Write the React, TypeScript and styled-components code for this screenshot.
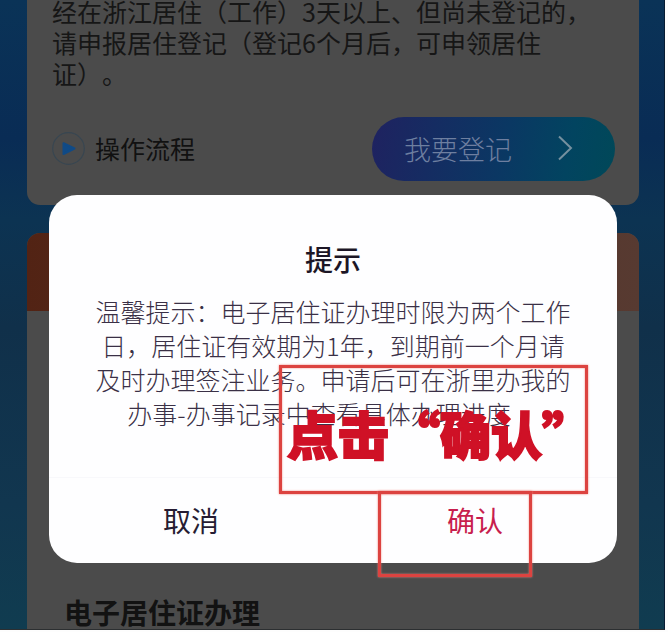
import React from "react";
import styled, { createGlobalStyle } from "styled-components";

const GlobalStyle = createGlobalStyle`
  *, *::before, *::after { box-sizing: border-box; }
  body {
    margin: 0;
    background: #fdfdfd;
    font-family: "Noto Sans CJK SC", "Liberation Sans", sans-serif;
    text-spacing-trim: space-all;
  }
  h1, h2, p { margin: 0; }
  button { border: 0; padding: 0; background: none; font: inherit; cursor: pointer; }
`;

const Page = styled.div`
  display: flex;
  min-height: 100vh;
  padding: 0 3px 3px 0;
`;

const Screen = styled.main`
  position: relative;
  flex: 1;
  display: flex;
  flex-direction: column;
  gap: 28px;
  padding: 0 25px 0 27px;
  overflow: hidden;
  border-right: 1px solid #071c33;
  border-bottom: 1px solid #2c2f31;
  background: linear-gradient(180deg, #0a3357 0%, #092c55 22%, #0c3352 35%, #10304a 52%, #11364f 80%, #103c50 100%);
`;

const NoticeCard = styled.section`
  padding: 0 40px 24px 25px;
  border-radius: 0 0 13px 13px;
  background: #4b4b4b;
`;

const NoticeText = styled.p`
  margin-top: -4px;
  color: #161616;
  font-size: 25px;
  line-height: 31px;
`;

const NoticeActions = styled.div`
  display: flex;
  align-items: center;
  justify-content: space-between;
  margin: 28px -16px 0 0;
`;

const FlowButton = styled.button`
  display: flex;
  align-items: center;
  gap: 10px;
  padding-bottom: 2px;
  color: #111111;
  font-size: 25px;
  line-height: 32px;
`;

const RegisterButton = styled.button`
  display: flex;
  align-items: center;
  justify-content: space-between;
  width: 243px;
  height: 64px;
  padding: 0 42px 2px 32px;
  border-radius: 32px;
  background: linear-gradient(100deg, #1f2260 0%, #152c62 25%, #0a3863 55%, #024460 80%, #004858 100%);
  color: #6e7fa0;
  font-size: 27px;
  font-weight: 300;
`;

const ServiceCard = styled.section`
  flex: 1;
  border-radius: 13px 13px 0 0;
  overflow: hidden;
  background: #4b4b4b;
`;

const ServiceBanner = styled.div`
  height: 78px;
  background: linear-gradient(90deg, #522314 0%, #563024 50%, #573a31 100%);
`;

const ServiceTitle = styled.h2`
  padding: 284px 37px 0;
  color: #121212;
  font-size: 28px;
  font-weight: 700;
  line-height: 34px;
`;

const Overlay = styled.div`
  position: absolute;
  inset: 0;
  padding: 195px 47px 0 49px;
`;

const Dialog = styled.div`
  position: relative;
  padding: 44px 0 0;
  border-radius: 28px;
  background: #fefeff;
  text-align: center;
`;

const DialogTitle = styled.h1`
  color: #1c1626;
  font-size: 28px;
  font-weight: 500;
  line-height: 40px;
`;

const DialogText = styled.p`
  padding: 15px 42px 47px;
  color: #3a3046;
  font-size: 25px;
  font-weight: 300;
  line-height: 34px;

  &::after {
    content: "";
    display: inline-block;
    width: 28px;
  }
`;

const DialogActions = styled.div`
  display: grid;
  grid-template-columns: 1fr 1fr;
  border-top: 1px solid #f8f8fb;
`;

const DialogButton = styled.button<{ $primary?: boolean }>`
  height: 85px;
  padding-bottom: 2px;
  color: ${(p) => (p.$primary ? "#c81e4e" : "#261c33")};
  font-size: 28px;
`;

const Mark = styled.div`
  position: absolute;
  border: 3px solid #dc4340;
  box-shadow: 0 0 2px #f0807a, inset 0 0 2px #f0807a;
  pointer-events: none;
`;

const HintMark = styled(Mark)`
  top: 170px;
  right: 29px;
  width: 309px;
  height: 129px;
  padding: 29px 0 0 5px;
  text-align: left;
`;

const ConfirmMark = styled(Mark)`
  top: 296px;
  right: 85px;
  width: 154px;
  height: 86px;
`;

const HintText = styled.p`
  color: #cf1126;
  -webkit-text-stroke: 2px #cf1126;
  font-size: 51px;
  font-weight: 900;
  line-height: 72px;
  white-space: nowrap;
`;

const PlayIcon = () => (
  <svg width="33" height="33" viewBox="0 0 33 33" aria-hidden="true">
    <circle cx="16.5" cy="16.5" r="15.8" fill="none" stroke="#384651" strokeWidth="1.2" />
    <path d="M11.5 11.2 L22.5 16.5 L11.5 22 Z" fill="#104a86" stroke="#104a86" strokeWidth="2" strokeLinejoin="round" />
  </svg>
);

const ChevronIcon = () => (
  <svg width="16" height="26" viewBox="0 0 16 26" aria-hidden="true">
    <path d="M2 1.5 L14 13 L2 24.5" fill="none" stroke="#75909f" strokeWidth="2" />
  </svg>
);

export default function App() {
  return (
    <>
      <GlobalStyle />
      <Page>
        <Screen>
          <NoticeCard>
            <NoticeText>
              经在浙江居住（工作）3天以上、但尚未登记的，请申报居住登记（登记6个月后，可申领居住证）。
            </NoticeText>
            <NoticeActions>
              <FlowButton type="button">
                <PlayIcon />
                操作流程
              </FlowButton>
              <RegisterButton type="button">
                我要登记
                <ChevronIcon />
              </RegisterButton>
            </NoticeActions>
          </NoticeCard>
          <ServiceCard>
            <ServiceBanner />
            <ServiceTitle>电子居住证办理</ServiceTitle>
          </ServiceCard>
          <Overlay>
            <Dialog role="dialog" aria-labelledby="dialog-title">
              <DialogTitle id="dialog-title">提示</DialogTitle>
              <DialogText>
                温馨提示：电子居住证办理时限为两个工作日，居住证有效期为1年，到期前一个月请及时办理签注业务。申请后可在浙里办我的办事-办事记录中查看具体办理进度
              </DialogText>
              <DialogActions>
                <DialogButton type="button">取消</DialogButton>
                <DialogButton type="button" $primary>
                  确认
                </DialogButton>
              </DialogActions>
              <HintMark>
                <HintText>点击“确认”</HintText>
              </HintMark>
              <ConfirmMark />
            </Dialog>
          </Overlay>
        </Screen>
      </Page>
    </>
  );
}
